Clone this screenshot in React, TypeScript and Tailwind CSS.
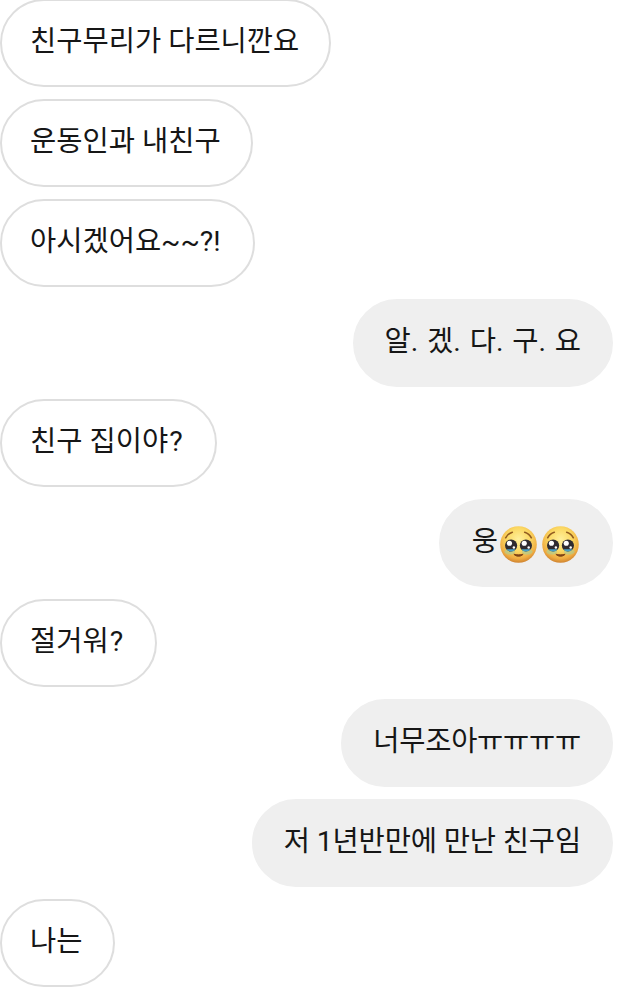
const incoming = 'self-start bg-white border-2 border-[#dedede] pl-[28px] pr-[30px]';
const outgoing = 'self-end bg-[#efefef] border-2 border-[#efefef] pl-[30px] pr-[30px]';

function PleadingFace() {
  return (
    <svg viewBox="0 0 36 36" className="w-[37px] h-[37px] shrink-0">
      <defs>
        <radialGradient id="face" cx="50%" cy="36%" r="64%">
          <stop offset="0%" stopColor="#fff09c" />
          <stop offset="50%" stopColor="#fbd862" />
          <stop offset="82%" stopColor="#f0ad42" />
          <stop offset="100%" stopColor="#cf8330" />
        </radialGradient>
      </defs>
      <circle cx="18" cy="18" r="17.8" fill="url(#face)" />
      <path d="M5.500 11.500c1.300-2.700 3.600-4.600 6.500-5.500M30.500 11.500c-1.300-2.700-3.600-4.600-6.500-5.500" fill="none" stroke="#8f5a20" strokeWidth="1.500" strokeLinecap="round" />
      <ellipse cx="9.500" cy="25" rx="5.200" ry="2.800" fill="#a6cf9a" opacity="0.6" />
      <ellipse cx="26.500" cy="25" rx="5.200" ry="2.800" fill="#a6cf9a" opacity="0.6" />
      <circle cx="10.800" cy="19" r="5.900" fill="#2f2b30" />
      <circle cx="25.200" cy="19" r="5.900" fill="#2f2b30" />
      <path d="M6.400 22.500a5.400 5.400 0 0 0 8.800 0z" fill="#4aa3c9" />
      <path d="M20.800 22.500a5.400 5.400 0 0 0 8.800 0z" fill="#4aa3c9" />
      <circle cx="9.200" cy="16.800" r="2.500" fill="#fff" />
      <circle cx="23.600" cy="16.800" r="2.500" fill="#fff" />
      <circle cx="13.500" cy="21" r="1.200" fill="#fff" />
      <circle cx="27.900" cy="21" r="1.200" fill="#fff" />
      <path d="M13.500 27.500c2.500 2.600 6.500 2.600 9 0-2.500.7-6.500.7-9 0z" fill="#7d4317" stroke="#7d4317" strokeWidth="0.900" strokeLinejoin="round" />
    </svg>
  );
}

function Bubble({ mine, className = '', children }: { mine?: boolean; className?: string; children: React.ReactNode }) {
  return (
    <div className={`h-[88px] rounded-[44px] pb-[1px] flex items-center text-[28.5px] text-[#161616] whitespace-nowrap ${mine ? outgoing : incoming} ${className}`}>
      {children}
    </div>
  );
}

export default function App() {
  return (
    <div className="w-[622px] h-[998px] overflow-hidden bg-white">
      <div
        className="flex flex-col gap-3 -mt-px pr-[9px]"
        style={{ fontFamily: 'Roboto, "Noto Sans CJK KR", sans-serif' }}
      >
        <Bubble>친구무리가 다르니깐요</Bubble>
        <Bubble>운동인과 내친구</Bubble>
        <Bubble className="pr-[32px]">아시겠어요~~?!</Bubble>
        <Bubble mine className="[word-spacing:1.75px]">알. 겠. 다. 구. 요</Bubble>
        <Bubble className="pr-[31px]">친구 집이야<span className="mx-[1px]">?</span></Bubble>
        <Bubble mine className="pl-[31px] pr-[32px]">
          웅
          <span className="flex gap-[5px] ml-[2px] mt-[3px]">
            <PleadingFace />
            <PleadingFace />
          </span>
        </Bubble>
        <Bubble className="pr-[31px]">절거워<span className="mx-[1px]">?</span></Bubble>
        <Bubble mine className="tracking-[-0.25px]">너무조아ㅠㅠㅠㅠ</Bubble>
        <Bubble mine className="tracking-[-0.15px]">저 1년반만에 만난 친구임</Bubble>
        <Bubble className="pr-[31px]">나는</Bubble>
      </div>
    </div>
  );
}
